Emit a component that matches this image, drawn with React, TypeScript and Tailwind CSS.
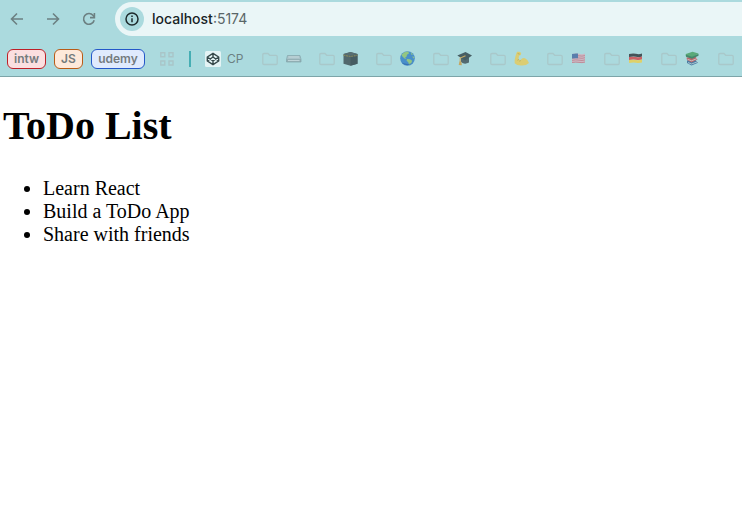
import type { ReactNode } from "react";

const todos = ["Learn React", "Build a ToDo App", "Share with friends"];

function BackIcon() {
  return (
    <svg viewBox="0 0 14 14" className="size-3.5" fill="none" stroke="currentColor" strokeWidth="1.6">
      <path d="M13 7H2M7 1.5 1.5 7 7 12.5" />
    </svg>
  );
}

function ForwardIcon() {
  return (
    <svg viewBox="0 0 14 14" className="size-3.5" fill="none" stroke="currentColor" strokeWidth="1.6">
      <path d="M1 7h11M7 1.5 12.5 7 7 12.5" />
    </svg>
  );
}

function ReloadIcon() {
  return (
    <svg viewBox="0 0 14 14" className="size-3.5" fill="none" stroke="currentColor" strokeWidth="1.6">
      <path d="M12.2 8.3A5.4 5.4 0 1 1 11.2 3.5L12.2 4.7" />
      <path d="M12.4 1v4.6H8" />
    </svg>
  );
}

function InfoIcon() {
  return (
    <svg viewBox="0 0 14 14" className="size-3.5" fill="none" stroke="#1d2a2c" strokeWidth="1.5">
      <circle cx="7" cy="7" r="6" />
      <path d="M7 6.3v4M7 3.6v1.5" />
    </svg>
  );
}

function GridIcon() {
  return (
    <svg viewBox="0 0 14 14" className="size-3.5" fill="none" stroke="#a9c5c8" strokeWidth="1.4">
      <path d="M.8.8h4v4h-4zM9 .8h4v4H9zM.8 9h4v4h-4zM9 9h4v4H9z" />
    </svg>
  );
}

function FolderIcon() {
  return (
    <svg viewBox="0 0 16 14" className="h-3.5 w-4 shrink-0" fill="none" stroke="#a9c8ca" strokeWidth="1.3">
      <path d="M2 1.500h4l1.700 1.800H14q1.200 0 1.200 1.200v6.800q0 1.200-1.200 1.200H2q-1.200 0-1.200-1.200V2.700q0-1.200 1.200-1.200z" />
    </svg>
  );
}

function CodepenIcon() {
  return (
    <svg viewBox="0 0 16 16" className="size-4" fill="none" stroke="#35484a" strokeWidth="1.4" strokeLinejoin="round">
      <rect width="16" height="16" rx="1.5" fill="#e4f4f5" stroke="none" />
      <path d="M8 2.3 13.700 6v4L8 13.700 2.300 10V6zM8 2.300V6M8 10v3.700M2.300 6 8 10l5.700-4M2.300 10 8 6l5.700 4" />
    </svg>
  );
}

function Glyph({ children }: { children: ReactNode }) {
  return (
    <svg viewBox="0 0 16 16" className="size-4 shrink-0">
      {children}
    </svg>
  );
}

const folders: { name: string; glyph: ReactNode }[] = [
  {
    name: "Drive",
    glyph: (
      <Glyph>
        <path d="M1.5 4.500h12.500l1 4.500H.5z" fill="#a9c3c8" />
        <path d="M.5 8h14.500v3H.5z" fill="#94b0b5" />
        <path d="M2.500 6h10.500M2 9.600h11.500" stroke="#c4d9dd" strokeWidth="1" />
        <path d="M1.500 4.500.5 8.300V11h14.500V8.300l-1-3.800z" fill="none" stroke="#83a5aa" strokeWidth=".7" />
      </Glyph>
    ),
  },
  {
    name: "Kaaba",
    glyph: (
      <Glyph>
        <path d="M.5 3 7.500 1l7 2v9.800L7.500 14.700.5 12.800z" fill="#52686d" />
        <path d="M7.500 4.500 14.500 3v9.800L7.500 14.700z" fill="#465c62" />
        <path d="M.5 3 7.500 1l7 2-7 1.500z" fill="#576d71" />
        <path d="M.5 4.200 7.500 5.500l7-1.300" fill="none" stroke="#83875f" strokeWidth="1.2" strokeDasharray="2 .6" />
      </Glyph>
    ),
  },
  {
    name: "World",
    glyph: (
      <Glyph>
        <circle cx="7.5" cy="7.500" r="7.300" fill="#498fc9" />
        <path d="M1.500 3.700Q4.500.2 8 .5l1.200 1.800L7 3.700l-.5 2-1.500.7 1.700 1.300-2.200-.2-2.300-2.300zM7 8l3 .2 2.200 1.500-1 2.500L9 14.300l-.7-3-1.700-1.600zM10.500 1.200l2.500 2-1.300.8zM12 5.500l2 .3v2z" fill="#93c582" />
        <path d="M1.500 11.500q5 5 11 .5-5 2-11-.5" fill="#3971b4" />
      </Glyph>
    ),
  },
  {
    name: "School",
    glyph: (
      <Glyph>
        <path d="M4 6.500V11q3.500 3 8 .5v-5z" fill="#526a70" />
        <path d="M.3 4.500 8.500 1l6.500 3.500-6.800 5z" fill="#465e64" />
        <path d="M8.500 4.700 3.200 7v4.500" fill="none" stroke="#c8ab65" strokeWidth="1.1" />
        <path d="m2.500 10.500 1.700.1.700 3.700-3.200-.3z" fill="#c5a761" />
      </Glyph>
    ),
  },
  {
    name: "Fitness",
    glyph: (
      <Glyph>
        <path d="M3 .8h2.700l1.500 1.300-.4 2-1.800.7-.5 3.400 1.800 1Q8.500 6.300 11 7.200q3.500 1.700 4 4.800-3 2.800-7.500 2.500-4.500.2-6.800-2.200Q.3 9 1.500 5z" fill="#dbcd73" />
        <path d="M4.500 8.200 3.800 9.500M6.300 9.200l-.5 1.300M3.700 2.600l2 .5" fill="none" stroke="#ae9f50" strokeWidth=".7" />
      </Glyph>
    ),
  },
  {
    name: "USA",
    glyph: (
      <Glyph>
        <path d="M1 3q4-1 7-.2t6-.3v8.700q-3 1-6 .4t-7 .3z" fill="#ccb8c4" />
        <path d="M1 5q4-1 7-.2t6-.3M1 7.200q4-1 7-.2t6-.3M1 9.400q4-1 7-.2t6-.3M1 11.500q4-.7 7-.1t6-.3" fill="none" stroke="#bf8d99" strokeWidth="1" />
        <path d="M1 3q3.500-1 6-.4v4.700q-3-.3-6 .3z" fill="#597eac" />
      </Glyph>
    ),
  },
  {
    name: "Germany",
    glyph: (
      <Glyph>
        <path d="M1 3q4-1 7-.2t6-.3v3q-3 1-6 .3t-7 .3z" fill="#445358" />
        <path d="M1 6.100q4-.8 7-.1t6-.4v3q-3 .8-6 .2t-7 .3z" fill="#cc6265" />
        <path d="M1 9.100q4-.8 7-.2t6-.4v3q-3 .8-6 .2t-7 .3z" fill="#dfd169" />
      </Glyph>
    ),
  },
  {
    name: "Books",
    glyph: (
      <Glyph>
        <path d="m2 9.500 8-1 3 3.200L6.500 14.500 2 12z" fill="#497da3" />
        <path d="m3 11.500 3.500 1.500 6-2.200" fill="none" stroke="#d4e3e3" strokeWidth=".7" />
        <path d="m1.500 6.500 9-.7 2 2.700-6 3L2 9z" fill="#b5656b" />
        <path d="m2.500 8.300 4 1.500 5.700-2.300" fill="none" stroke="#d8e3df" strokeWidth=".7" />
        <path d="m.8 3 6.700-2.200 6 1.800L7 6.500.8 4.700z" fill="#5aa979" />
        <path d="m.8 3.700 6.200 2 6.500-2.900v2L7 7.800 1 5.700z" fill="#43886b" />
      </Glyph>
    ),
  },
];

export default function App() {
  return (
    <div className="min-h-screen overflow-hidden bg-white">
      <header className="border-b border-[#7da5a9] bg-[#abdade] font-['Inter',sans-serif] text-[#6c8082]">
        <nav aria-label="Browser" className="flex h-[38px] items-center pl-2.5">
          <div className="flex items-center gap-[22px] pr-[19px]">
            <button type="button" aria-label="Back"><BackIcon /></button>
            <button type="button" aria-label="Forward"><ForwardIcon /></button>
            <button type="button" aria-label="Reload"><ReloadIcon /></button>
          </div>
          <div className="flex h-[34px] flex-1 items-center gap-2 rounded-l-full bg-[#eaf6f7] pl-[5px]">
            <button type="button" aria-label="Site information" className="flex size-6 items-center justify-center rounded-full bg-[#abdade]">
              <InfoIcon />
            </button>
            <div className="text-sm text-[#596668]">
              <span className="font-medium text-[#182426]">localhost</span>:5174
            </div>
          </div>
        </nav>
        <nav aria-label="Bookmarks" className="flex h-[38px] items-center overflow-hidden pb-px pl-[7px] pt-1 text-xs">
          <div className="flex shrink-0 gap-2 font-semibold text-[#747b7d]">
            <button type="button" className="h-5 w-[39px] rounded-md border border-[#bd2028] bg-[#fbdfe0] leading-none">intw</button>
            <button type="button" className="h-5 w-[29px] rounded-md border border-[#b85b17] bg-[#fee9da] leading-none">JS</button>
            <button type="button" className="h-5 w-[54px] rounded-md border border-[#2458c9] bg-[#dfeafd] leading-none">udemy</button>
          </div>
          <button type="button" aria-label="All apps" className="ml-[15px] shrink-0"><GridIcon /></button>
          <div className="ml-[15px] h-4 w-0.5 shrink-0 bg-[#46aeb4]" />
          <button type="button" className="ml-3.5 flex w-[57px] shrink-0 items-center gap-1.5">
            <CodepenIcon />CP
          </button>
          <div className="flex shrink-0">
            {folders.map((folder) => (
              <button key={folder.name} type="button" aria-label={folder.name} className="flex w-[57px] shrink-0 items-center gap-2">
                <FolderIcon />
                {folder.glyph}
              </button>
            ))}
            <button type="button" aria-label="Folder"><FolderIcon /></button>
          </div>
        </nav>
      </header>
      <main className="px-[3px] pt-[26px] font-['Liberation_Serif',serif] text-black">
        <h1 className="text-[40px] font-bold leading-[46px]">ToDo List</h1>
        <ul className="mt-7 list-disc pl-10 text-[20px] leading-[23px]">
          {todos.map((todo) => (
            <li key={todo}>{todo}</li>
          ))}
        </ul>
      </main>
    </div>
  );
}
